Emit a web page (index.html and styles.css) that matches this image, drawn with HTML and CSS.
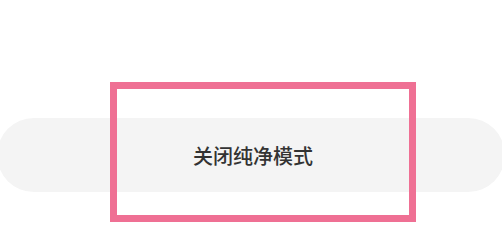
FILE: index.html
```html
<!DOCTYPE html>
<html lang="zh-CN">
<head>
    <meta charset="UTF-8">
    <meta name="viewport" content="width=device-width, initial-scale=1.0">
    <title>纯净模式</title>
    <link rel="stylesheet" href="styles.css">
</head>
<body>
    <div class="page">
        <button class="pill-button">关闭纯净模式</button>
        <div class="highlight-box"></div>
    </div>
</body>
</html>
```

FILE: styles.css
```css
* {
    margin: 0;
    padding: 0;
    box-sizing: border-box;
}

body {
    background-color: #ffffff;
    font-family: "Noto Sans CJK SC", "Noto Sans", sans-serif;
}

.page {
    position: relative;
    width: 502px;
    height: 249px;
    padding-top: 118px;
    overflow: hidden;
}

.pill-button {
    display: flex;
    align-items: center;
    justify-content: center;
    width: 508px;
    height: 74px;
    margin-left: -3px;
    border: none;
    border-radius: 37px;
    background-color: #f4f4f4;
    color: #333333;
    font-family: "Noto Sans CJK SC", sans-serif;
    font-size: 20px;
    font-weight: 500;
    letter-spacing: 0;
    padding-left: 4px;
}

/* annotation frame drawn over the button */
.highlight-box {
    position: absolute;
    left: 110px;
    top: 82px;
    width: 306px;
    height: 140px;
    border: 7px solid #ef7094;
}
```
